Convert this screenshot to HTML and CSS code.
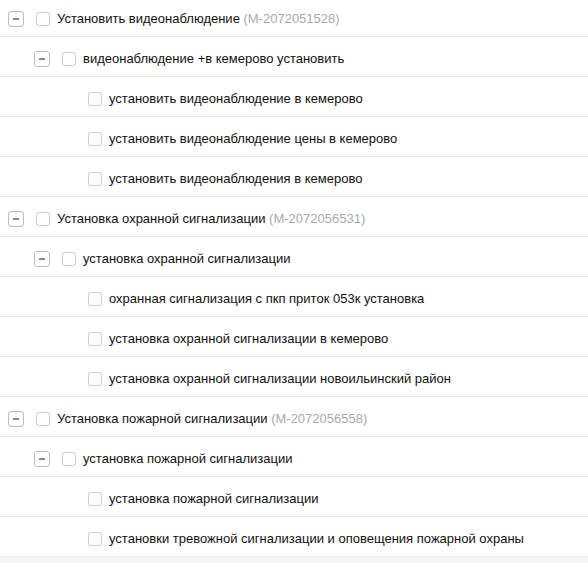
FILE: index.html
```html
<!DOCTYPE html>
<html>
<head>
<meta charset="utf-8">
<link rel="stylesheet" href="styles.css">
</head>
<body>
<div class="tree">
  <div class="row l0"><span class="toggle"></span><span class="cb"></span><span class="label">Установить видеонаблюдение <span class="id">(M-2072051528)</span></span></div>
  <div class="row l1"><span class="toggle"></span><span class="cb"></span><span class="label">видеонаблюдение +в кемерово установить</span></div>
  <div class="row l2"><span class="spacer"></span><span class="cb"></span><span class="label">установить видеонаблюдение в кемерово</span></div>
  <div class="row l2"><span class="spacer"></span><span class="cb"></span><span class="label">установить видеонаблюдение цены в кемерово</span></div>
  <div class="row l2"><span class="spacer"></span><span class="cb"></span><span class="label">установить видеонаблюдения в кемерово</span></div>
  <div class="row l0"><span class="toggle"></span><span class="cb"></span><span class="label">Установка охранной сигнализации <span class="id">(M-2072056531)</span></span></div>
  <div class="row l1"><span class="toggle"></span><span class="cb"></span><span class="label">установка охранной сигнализации</span></div>
  <div class="row l2"><span class="spacer"></span><span class="cb"></span><span class="label">охранная сигнализация с пкп приток 053к установка</span></div>
  <div class="row l2"><span class="spacer"></span><span class="cb"></span><span class="label">установка охранной сигнализации в кемерово</span></div>
  <div class="row l2"><span class="spacer"></span><span class="cb"></span><span class="label">установка охранной сигнализации новоильинский район</span></div>
  <div class="row l0"><span class="toggle"></span><span class="cb"></span><span class="label">Установка пожарной сигнализации <span class="id">(M-2072056558)</span></span></div>
  <div class="row l1"><span class="toggle"></span><span class="cb"></span><span class="label">установка пожарной сигнализации</span></div>
  <div class="row l2"><span class="spacer"></span><span class="cb"></span><span class="label">установка пожарной сигнализации</span></div>
  <div class="row l2"><span class="spacer"></span><span class="cb"></span><span class="label">установки тревожной сигнализации и оповещения пожарной охраны</span></div>
</div>
</body>
</html>
```
FILE: styles.css
```css
html, body {
  margin: 0;
  padding: 0;
  background: #f5f5f5;
}
body {
  font-family: "Liberation Sans", Arial, sans-serif;
  font-size: 13px;
  color: #111;
}
.tree {
  background: #fff;
  margin-top: -3px;
}
.row {
  display: flex;
  align-items: center;
  height: 35px;
  padding-top: 4px;
  border-bottom: 1px solid #ebebeb;
  padding-left: 8px;
}
.row.l1 { padding-left: 34px; }
.row.l2 { padding-left: 60px; }
.toggle, .spacer {
  width: 16px;
  height: 16px;
  flex: none;
  box-sizing: border-box;
  margin-right: 12px;
}
.toggle {
  position: relative;
  border: 1px solid #bdbdbd;
  border-radius: 3px;
  background: #fff;
}
.toggle::after {
  content: "";
  position: absolute;
  left: 4px;
  width: 6px;
  top: 6px;
  height: 2px;
  background: #8a8a8a;
}
.cb {
  width: 14px;
  height: 14px;
  box-sizing: border-box;
  border: 1px solid #cdcdcd;
  border-radius: 3px;
  background: #fff;
  flex: none;
  margin-right: 7px;
}
.label {
  white-space: nowrap;
}
.id {
  color: #aaa;
}
```
